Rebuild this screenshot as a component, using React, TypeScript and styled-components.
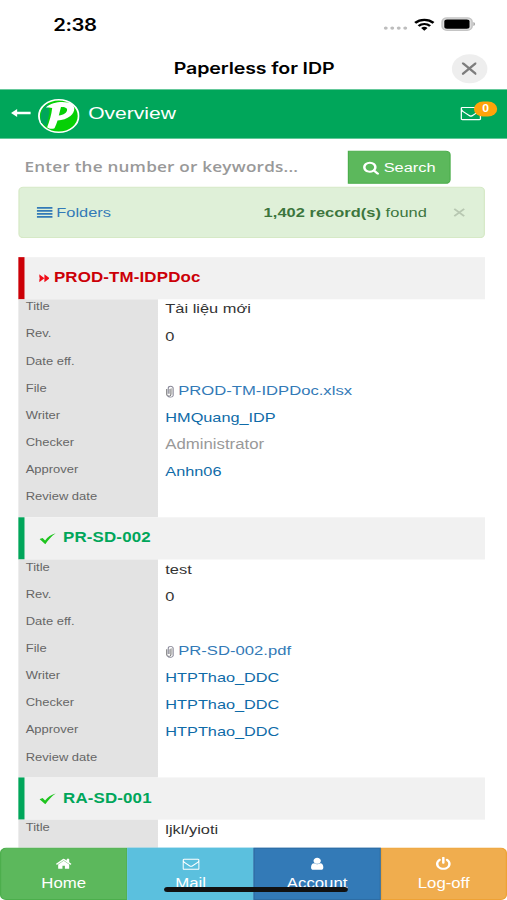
import React from "react";
import styled, { createGlobalStyle } from "styled-components";

const Global = createGlobalStyle`
  *, *::before, *::after { box-sizing: border-box; }
  html, body { margin: 0; padding: 0; background: #fff; overflow: hidden; }
  body { width: 507px; height: 900px; }
`;

/* The phone screen is 414x896 points and is stretched to fill the window. */
const Screen = styled.div`
  width: 414px;
  height: 896px;
  transform: scale(1.22464, 1.00446);
  transform-origin: 0 0;
  display: flex;
  flex-direction: column;
  overflow: hidden;
  background: #fff;
  color: #333;
  font-family: "Liberation Sans", Arial, sans-serif;
  font-size: 13px;
`;

const Label = styled.span<{ $size?: number; $track?: number }>`
  font-size: ${(p) => p.$size ?? 13.4}px;
  letter-spacing: ${(p) => p.$track ?? 0}px;
  white-space: nowrap;
`;

const StatusBar = styled.div`
  height: 46px;
  flex: none;
  display: flex;
  align-items: center;
  padding: 3px 26px 0 43.5px;
  color: #000;
`;

const Clock = styled.span`
  flex: 1;
  font: 600 16.6px Inter, sans-serif;
  letter-spacing: -0.35px;
`;

const StatusIcons = styled.div`
  display: flex;
  align-items: center;
  gap: 5px;
  padding-bottom: 1px;
`;

const TitleBar = styled.div`
  height: 43px;
  flex: none;
  display: grid;
  grid-template-columns: 60px 1fr 60px;
  align-items: center;
  color: #000;
`;

const AppTitle = styled.h1`
  grid-column: 2;
  margin: 0 0 0 1px;
  text-align: center;
  font: 600 16px Inter, sans-serif;
  letter-spacing: -0.1px;
`;

const CloseButton = styled.button`
  width: 29px;
  height: 29px;
  margin: 2px 0 0 14.5px;
  border: 0;
  padding: 0;
  border-radius: 50%;
  background: #eee;
  display: grid;
  place-items: center;
`;

const Header = styled.header`
  height: 49px;
  flex: none;
  display: flex;
  align-items: center;
  padding: 0 8px 1.5px 9px;
  background: #00a65a;
  color: #fff;
`;

const Logo = styled.svg`
  width: 34px;
  height: 35px;
  margin: 4.5px 7px 0 5px;
`;

const Inbox = styled.div`
  position: relative;
  margin-left: auto;
  width: 30px;
  height: 22px;
  display: flex;
  align-items: center;
`;

const Badge = styled.span`
  position: absolute;
  top: -1px;
  right: 0;
  width: 19px;
  height: 15px;
  border-radius: 8px;
  background: #ffa30a;
  font: bold 10px/15px "Liberation Sans", sans-serif;
  text-align: center;
`;

const Content = styled.main`
  flex: 1;
  min-height: 0;
  overflow: hidden;
  padding: 12px 18.4px 0 15px;
`;

const SearchRow = styled.form`
  display: flex;
  height: 33px;
  margin-bottom: 3px;
`;

const SearchInput = styled.input`
  width: 269px;
  border: 0;
  outline: 0;
  padding: 0 5px 1.5px;
  background: #fff;
  font: 600 14px "Open Sans", sans-serif;
  letter-spacing: 0.16px;
  &::placeholder { color: #999; opacity: 1; }
`;

const SearchButton = styled.button`
  width: 84px;
  border: 1px solid #4cae4c;
  border-radius: 0 4px 4px 0;
  background: #5cb85c;
  color: #fff;
  padding: 0;
  display: flex;
  align-items: center;
  justify-content: center;
  gap: 3px;
  font: 13px "Liberation Sans", sans-serif;
`;

const Alert = styled.div`
  height: 50.5px;
  border: 1px solid #d6e9c6;
  border-radius: 4px;
  background: #dff0d8;
  color: #3c763d;
  display: flex;
  align-items: center;
  padding: 0 14px;
  margin-bottom: 19px;
`;

const Folders = styled.a`
  flex: 1;
  display: flex;
  align-items: center;
  gap: 3px;
  color: #337ab7;
`;

const Dismiss = styled.svg`
  width: 10px;
  height: 9px;
  margin: 0 1px 0 21px;
`;

const RecordHead = styled.div<{ $tone: string; $gap: number }>`
  height: 42.3px;
  display: flex;
  align-items: center;
  gap: ${(p) => p.$gap}px;
  padding-left: ${(p) => (p.$gap > 4 ? 12 : 11.5)}px;
  border-left: 5px solid ${(p) => p.$tone};
  background: #f1f1f1;
  color: ${(p) => p.$tone};
  font-weight: bold;
`;

const Fields = styled.div<{ $fill: boolean }>`
  min-height: ${(p) => (p.$fill ? 60 : 0)}px;
  background: linear-gradient(#e3e3e3, #e3e3e3) 0 0 / 114.3px 100% no-repeat;
`;

const Row = styled.div`
  display: grid;
  grid-template-columns: 114.3px 1fr;
  height: 27.1px;
`;

const Key = styled.div`
  color: #666;
  padding-left: 6px;
  line-height: 13px;
`;

const Value = styled.div<{ $color?: string }>`
  padding-left: 5.7px;
  line-height: 20.8px;
  color: ${(p) => p.$color ?? "#333"};
  display: flex;
`;

const Clip = styled.svg`
  width: 8px;
  height: 13px;
  margin: 4px 2.5px 0 0;
`;

const TabBar = styled.nav`
  position: relative;
  flex: none;
  height: 52px;
  display: grid;
  grid-template-columns: 104px 103.3px 103.3px 1fr;
`;

const Tab = styled.a<{ $bg: string; $edge: string; $radius?: string }>`
  background: ${(p) => p.$bg};
  border: 1px solid ${(p) => p.$edge};
  border-radius: ${(p) => p.$radius ?? "0"};
  color: #fff;
  display: flex;
  flex-direction: column;
  align-items: center;
  padding-top: 8px;
  gap: 4px;
  line-height: 17px;
`;

const HomeIndicator = styled.div`
  position: absolute;
  left: 133.5px;
  right: 130px;
  bottom: 8px;
  height: 5px;
  border-radius: 3px;
  background: #111;
`;

const paths = {
  search:
    "M1216 832q0-185-131.5-316.5t-316.5-131.5-316.5 131.5-131.5 316.5 131.5 316.5 316.5 131.5 316.5-131.5 131.5-316.5zm512 832q0 52-38 90t-90 38q-54 0-90-38l-343-342q-179 124-399 124-143 0-273.5-55.5t-225-150-150-225-55.5-273.5 55.5-273.5 150-225 225-150 273.5-55.5 273.5 55.5 225 150 150 225 55.5 273.5q0 220-124 399l343 343q37 37 37 90z",
  home:
    "M1472 992v480q0 26-19 45t-45 19h-384v-384h-256v384h-384q-26 0-45-19t-19-45v-480q0-1 .5-3t.5-3l575-474 575 474q1 2 1 6zm223-69l-62 74q-8 9-21 11h-3q-13 0-21-7l-692-577-692 577q-12 8-24 7-13-2-21-11l-62-74q-8-10-7-23.5t11-21.5l719-599q32-26 76-26t76 26l244 204v-195q0-14 9-23t23-9h192q14 0 23 9t9 23v408l219 182q10 8 11 21.5t-7 23.5z",
  mail:
    "M1664 1504v-768q-32 36-69 66-268 206-426 338-51 43-83 67t-86.5 48.5-102.5 24.5h-2q-48 0-102.5-24.5t-86.5-48.5-83-67q-158-132-426-338-37-30-69-66v768q0 13 9.5 22.5t22.5 9.5h1472q13 0 22.5-9.5t9.5-22.5zm0-1051v-24.5l-.5-13-3-12.5-5.5-9-9-7.5-14-2.5h-1472q-13 0-22.5 9.5t-9.5 22.5q0 168 147 284 193 152 401 317 6 5 35 29.5t46 37.5 44.5 31.5 50.5 27.5 43 9h2q20 0 43-9t50.5-27.5 44.5-31.5 46-37.5 35-29.5q208-165 401-317 54-43 100.5-115.5t46.5-131.5zm128-37v1088q0 66-47 113t-113 47h-1472q-66 0-113-47t-47-113v-1088q0-66 47-113t113-47h1472q66 0 113 47t47 113z",
  user:
    "M1536 1399q0 109-62.5 187t-150.5 78h-854q-88 0-150.5-78t-62.5-187q0-85 8.5-160.5t31.5-152 58.5-131 94-89 134.5-34.5q131 128 313 128t313-128q76 0 134.5 34.5t94 89 58.5 131 31.5 152 8.5 160.5zm-256-887q0 159-112.5 271.5t-271.5 112.5-271.5-112.5-112.5-271.5 112.5-271.5 271.5-112.5 271.5 112.5 112.5 271.5z",
  power:
    "M1664 896q0 156-61 298t-164 245-245 164-298 61-298-61-245-164-164-245-61-298q0-182 80.5-343t226.5-270q43-32 95.5-25t83.5 50q32 42 24.5 94.5t-49.5 84.5q-98 74-151.5 181t-53.5 228q0 104 40.5 198.5t109.5 163.5 163.5 109.5 198.5 40.5 198.5-40.5 163.5-109.5 109.5-163.5 40.5-198.5q0-121-53.5-228t-151.5-181q-42-32-49.5-84.5t24.5-94.5q31-43 84-50t95 25q146 109 226.5 270t80.5 343zm-640-768v640q0 52-38 90t-90 38-90-38-38-90v-640q0-52 38-90t90-38 90 38 38 90z",
};

const Icon = ({ name, size = 14 }: { name: keyof typeof paths; size?: number }) => (
  <svg width={size} height={size} viewBox="0 0 1792 1792" fill="currentColor">
    <path d={paths[name]} />
  </svg>
);

const Check = () => (
  <svg width="14" height="13" viewBox="0 0 14 13">
    <path d="M.3 7.7 2.8 6.5l2 2.5C7 5.7 9.5 3.5 13.5 2 10 5 7.5 8.5 5 12.8z" fill="#1fc41f" />
  </svg>
);

const FastForward = () => (
  <svg width="8.5" height="9" viewBox="0 0 10 9" preserveAspectRatio="none">
    <path d="M0 1 5 5 0 9V6.5L.5 5 0 3.5zM5 1l5 4-5 4z" fill="#f00d18" />
  </svg>
);

const PaperClip = () => (
  <Clip viewBox="0 0 9 15" fill="none" preserveAspectRatio="none">
    <path d="M1.3 5v6.3a1.9 1.9 0 0 0 3.8 0V4.5" stroke="#777" />
    <path d="M2.7 10.5V4a2.2 2.2 0 0 1 4.500 0v7.3a2.500 2.500 0 0 1-5 1" stroke="#8a8a9a" />
    <path d="M4 5v5.500M6 4v7" stroke="#bbb" strokeWidth="1.2" />
  </Clip>
);

type Person = { name: string; color?: string };
type Entry = {
  code: string;
  state: "new" | "approved";
  title: string;
  rev?: string;
  file?: string;
  people?: Person[];
};

const link = "#0f6ba8";
const entries: Entry[] = [
  {
    code: "PROD-TM-IDPDoc",
    state: "new",
    title: "Tài liệu mới",
    rev: "0",
    file: "PROD-TM-IDPDoc.xlsx",
    people: [{ name: "HMQuang_IDP" }, { name: "Administrator", color: "#999" }, { name: "Anhn06" }],
  },
  {
    code: "PR-SD-002",
    state: "approved",
    title: "test",
    rev: "0",
    file: "PR-SD-002.pdf",
    people: [{ name: "HTPThao_DDC" }, { name: "HTPThao_DDC" }, { name: "HTPThao_DDC" }],
  },
  { code: "RA-SD-001", state: "approved", title: "ljkl/yioti" },
];

const Field = ({ name, color, children }: { name: string; color?: string; children?: React.ReactNode }) => (
  <Row>
    <Key><Label $size={10.6}>{name}</Label></Key>
    <Value $color={color}>{children}</Value>
  </Row>
);

const RecordCard = ({ entry }: { entry: Entry }) => {
  const isNew = entry.state === "new";
  return (
    <section>
      <RecordHead $tone={isNew ? "#cc0007" : "#00a65a"} $gap={isNew ? 4 : 5.5}>
        {isNew ? <FastForward /> : <Check />}
        <Label $size={13.8} $track={0.12}>{entry.code}</Label>
      </RecordHead>
      <Fields $fill={!entry.people}>
        <Field name="Title"><Label>{entry.title}</Label></Field>
        {entry.people && (
          <>
            <Field name="Rev."><Label>{entry.rev}</Label></Field>
            <Field name="Date eff." />
            <Field name="File" color="#337ab7">
              <PaperClip />
              <Label $size={13.6}>{entry.file}</Label>
            </Field>
            {["Writer", "Checker", "Approver"].map((role, i) => (
              <Field key={role} name={role} color={entry.people![i].color ?? link}>
                <Label $size={entry.people![i].color ? 13.7 : 13.3}>{entry.people![i].name}</Label>
              </Field>
            ))}
            <Field name="Review date" />
          </>
        )}
      </Fields>
    </section>
  );
};

export default function App() {
  return (
    <>
      <Global />
      <Screen>
        <StatusBar>
          <Clock>2:38</Clock>
          <StatusIcons>
            <svg width="20" height="12" viewBox="0 0 20 12" fill="#bdbdbd">
              <circle cx="2" cy="10" r="1.6" /><circle cx="7.3" cy="10" r="1.6" />
              <circle cx="12.6" cy="10" r="1.6" /><circle cx="17.9" cy="10" r="1.6" />
            </svg>
            <svg width="17" height="13" viewBox="0 0 17 13" fill="none" stroke="#000" strokeWidth="2.2">
              <path d="M1 4.8a10.7 10.7 0 0 1 15 0M3.8 7.8a6.7 6.7 0 0 1 9.4 0" />
              <path d="M8.5 12.5 5.9 9.9a3.7 3.7 0 0 1 5.2 0z" fill="#000" stroke="none" />
            </svg>
            <svg width="28" height="14" viewBox="0 0 28 14">
              <rect x="1" y=".8" width="24.500" height="12.400" rx="4" fill="#ddd" stroke="#c4c4c4" strokeWidth="1.3" />
              <rect x="2.8" y="2.3" width="20.6" height="9.4" rx="2.2" />
              <path d="M26.500 5v4q1.500-.6 1.500-2t-1.500-2z" fill="#aaa" />
            </svg>
          </StatusIcons>
        </StatusBar>
        <TitleBar>
          <AppTitle>Paperless for IDP</AppTitle>
          <CloseButton aria-label="Close">
            <svg width="12.500" height="12.500" viewBox="0 0 12 12" stroke="#7d7d7d" strokeWidth="2" strokeLinecap="round">
              <path d="M1 1l10 10M11 1 1 11" />
            </svg>
          </CloseButton>
        </TitleBar>
        <Header>
          <svg width="17" height="9" viewBox="0 0 17 9" fill="#fff">
            <path d="M0 4.5 5 .5v2.800H16v2.400H5v2.800z" />
          </svg>
          <Logo viewBox="0 0 34 35">
            <circle cx="17" cy="17.5" r="16.200" fill="#06d006" stroke="#fff" strokeWidth="1.500" />
            <path d="M2.500 24C1 14 4 8 8.500 5L9.500 14 7 28z" fill="#00a65a" />
            <path
              fillRule="evenodd"
              d="M6.5 9C11 3.500 19 2.800 24.500 4c6.500 1.500 6.500 9 2 13.500-2.800 2.800-6.500 4.200-10.500 4.400-.7 2.800-1.500 5.400-2.500 7.800-2 1-4.500.5-6-1C9.500 22.500 11 16 11.600 9.500c-2-.3-3.400-.2-5.100-.5zM18.800 8.500 17 17c4-.5 6.800-2.700 6.800-5.700 0-2-2-2.800-5-2.800z"
              fill="#fff"
            />
          </Logo>
          <Label $size={17.2}>Overview</Label>
          <Inbox>
            <Icon name="mail" size={17} />
            <Badge>0</Badge>
          </Inbox>
        </Header>
        <Content>
          <SearchRow>
            <SearchInput placeholder="Enter the number or keywords..." />
            <SearchButton type="button">
              <Icon name="search" />
              <Label>Search</Label>
            </SearchButton>
          </SearchRow>
          <Alert>
            <Folders>
              <svg width="13" height="11" viewBox="0 0 13 11" fill="currentColor">
                <path d="M0 0h13v1.800H0zM0 3h13v1.800H0zM0 6h13v1.800H0zM0 9h13v1.800H0z" />
              </svg>
              <Label>Folders</Label>
            </Folders>
            <Label $track={0.04}><b>1,402 record(s)</b> found</Label>
            <Dismiss viewBox="0 0 11 10" stroke="#b8c8b2" strokeWidth="1.8">
              <path d="M1 1l9 8M10 1 1 9" />
            </Dismiss>
          </Alert>
          {entries.map((entry) => <RecordCard key={entry.code} entry={entry} />)}
        </Content>
        <TabBar>
          <Tab $bg="#5cb85c" $edge="#4cae4c" $radius="5px 0 0 5px"><Icon name="home" /><Label $size={13.7}>Home</Label></Tab>
          <Tab $bg="#5bc0de" $edge="#5bc0de"><Icon name="mail" /><Label $size={13.7}>Mail</Label></Tab>
          <Tab $bg="#337ab7" $edge="#2e6da4"><Icon name="user" /><Label $size={13.7}>Account</Label></Tab>
          <Tab $bg="#f0ad4e" $edge="#eea236" $radius="0 5px 5px 0"><Icon name="power" /><Label $size={13.7}>Log-off</Label></Tab>
          <HomeIndicator />
        </TabBar>
      </Screen>
    </>
  );
}
